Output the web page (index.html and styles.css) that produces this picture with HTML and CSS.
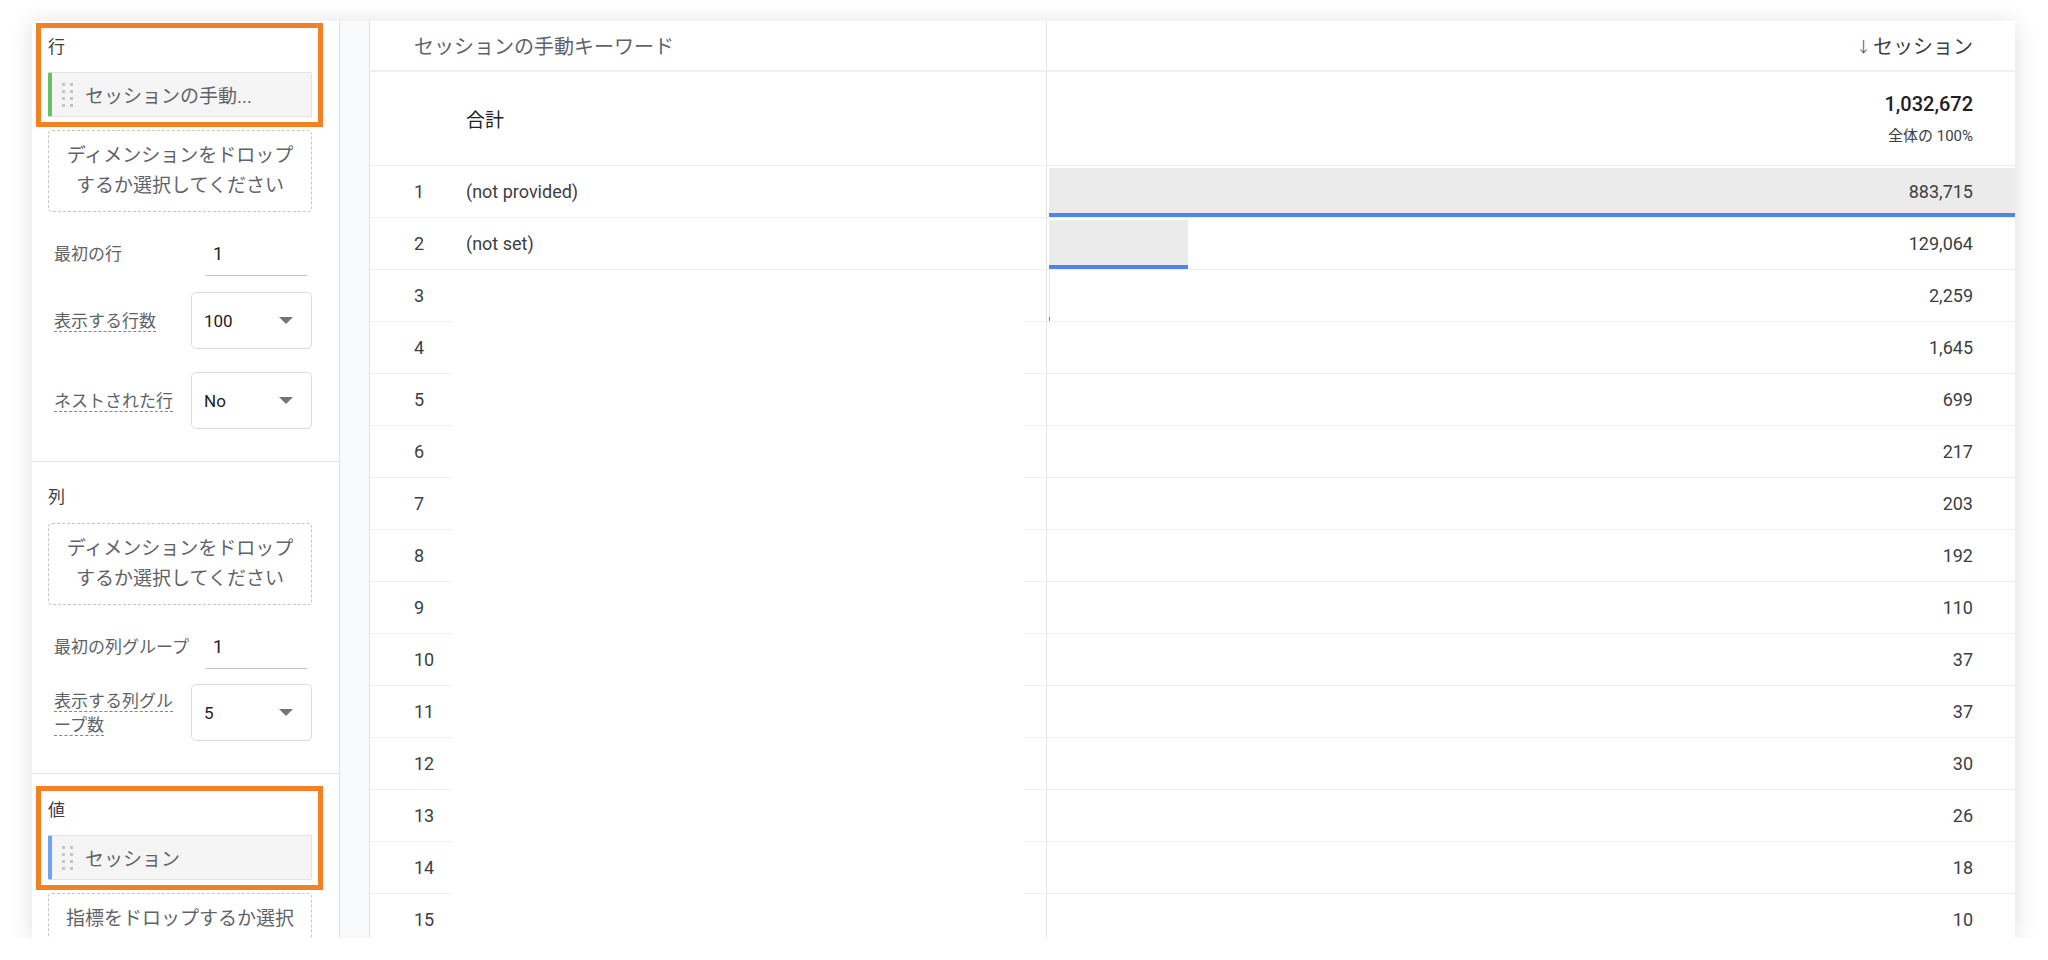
FILE: index.html
```html
<!DOCTYPE html>
<html lang="ja">
<head>
    <meta charset="UTF-8">
    <title>自由形式 - セッションの手動キーワード</title>
    <link rel="stylesheet" href="styles.css">
</head>
<body>
    <div class="card">
        <aside class="settings">
            <section class="group">
                <div class="highlight">
                    <div class="group-label">行</div>
                    <div class="chip chip-dim">
                        <svg class="handle" width="12" height="24" viewBox="0 0 12 24">
                            <rect x="0" y="0" width="3" height="3"/><rect x="8" y="0" width="3" height="3"/>
                            <rect x="0" y="7" width="3" height="3"/><rect x="8" y="7" width="3" height="3"/>
                            <rect x="0" y="14" width="3" height="3"/><rect x="8" y="14" width="3" height="3"/>
                            <rect x="0" y="21" width="3" height="3"/><rect x="8" y="21" width="3" height="3"/>
                        </svg>
                        <span>セッションの手動...</span>
                    </div>
                </div>
                <div class="dropzone">ディメンションをドロップ<br>するか選択してください</div>
                <div class="field field-input">
                    <span class="field-label">最初の行</span>
                    <div class="text-input">1</div>
                </div>
                <div class="field field-select">
                    <span class="field-label"><span class="hint">表示する行数</span></span>
                    <div class="select"><span>100</span><span class="caret"></span></div>
                </div>
                <div class="field field-select field-gap">
                    <span class="field-label"><span class="hint">ネストされた行</span></span>
                    <div class="select"><span>No</span><span class="caret"></span></div>
                </div>
            </section>

            <section class="group group-plain">
                <div class="group-label">列</div>
                <div class="dropzone dropzone-tight">ディメンションをドロップ<br>するか選択してください</div>
                <div class="field field-input">
                    <span class="field-label">最初の列グループ</span>
                    <div class="text-input">1</div>
                </div>
                <div class="field field-select field-tight">
                    <span class="field-label"><span class="hint">表示する列グループ数</span></span>
                    <div class="select"><span>5</span><span class="caret"></span></div>
                </div>
            </section>

            <section class="group group-values">
                <div class="highlight">
                    <div class="group-label">値</div>
                    <div class="chip chip-metric">
                        <svg class="handle" width="12" height="24" viewBox="0 0 12 24">
                            <rect x="0" y="0" width="3" height="3"/><rect x="8" y="0" width="3" height="3"/>
                            <rect x="0" y="7" width="3" height="3"/><rect x="8" y="7" width="3" height="3"/>
                            <rect x="0" y="14" width="3" height="3"/><rect x="8" y="14" width="3" height="3"/>
                            <rect x="0" y="21" width="3" height="3"/><rect x="8" y="21" width="3" height="3"/>
                        </svg>
                        <span>セッション</span>
                    </div>
                </div>
                <div class="dropzone dropzone-cut">指標をドロップするか選択</div>
            </section>
        </aside>

        <div class="gutter"></div>

        <div class="report">
            <div class="thead">
                <div class="cell-dim">セッションの手動キーワード</div>
                <div class="cell-metric"><span class="sort">↓</span>セッション</div>
            </div>
            <div class="total">
                <div class="cell-dim"><span class="rank"></span><span>合計</span></div>
                <div class="cell-metric">
                    <div class="total-value">1,032,672</div>
                    <div class="total-share">全体の 100%</div>
                </div>
            </div>
            <div class="tbody" id="rows">
                <!-- 3行目以降のキーワードは伏せてある -->
                <div class="mask"></div>
            </div>
        </div>
    </div>

    <script>
        const rows = [
            ['(not provided)', 883715],
            ['(not set)', 129064],
            ['', 2259],
            ['', 1645],
            ['', 699],
            ['', 217],
            ['', 203],
            ['', 192],
            ['', 110],
            ['', 37],
            ['', 37],
            ['', 30],
            ['', 26],
            ['', 18],
            ['', 10]
        ];
        const max = rows[0][1];
        const body = document.getElementById('rows');
        let html = '';
        rows.forEach((r, i) => {
            const pct = (r[1] / max * 100).toFixed(3);
            html += `
                <div class="row">
                    <div class="cell-dim"><span class="rank">${i + 1}</span><span>${r[0]}</span></div>
                    <div class="cell-metric">
                        <div class="bar" style="width: calc(${pct}% - 2px)"></div>
                        <span class="value">${r[1].toLocaleString('en-US')}</span>
                    </div>
                </div>`;
        });
        body.insertAdjacentHTML('afterbegin', html);
    </script>
</body>
</html>
```

FILE: styles.css
```css
body {
    margin: 0;
    padding: 21px 0 0 32px;
    background: #fff;
    font-family: Roboto, "Noto Sans CJK JP", sans-serif;
    color: #3c4043;
}
.card {
    display: flex;
    width: 1983px;
    height: 917px;
    overflow: hidden;
    background: #fff;
    box-shadow: 0 2px 22px rgba(0, 0, 0, 0.13);
}

/* 左の設定パネル */
.settings {
    width: 308px;
    flex: none;
    border-right: 1px solid #e3e3e3;
    box-sizing: border-box;
    overflow: hidden;
}
.group {
    padding: 2px 27px 32px 16px;
    border-bottom: 1px solid #e3e3e3;
}
.group-plain {
    padding-top: 23px;
}
.group-values {
    padding-top: 12px;
    border-bottom: none;
}
.highlight {
    margin: 0 -11px 0 -12px;
    border: 5px solid #f28123;
    padding: 7px 6px 5px 7px;
}
.group-label {
    font-size: 17px;
    line-height: 24px;
    color: #3c4043;
}
.chip {
    display: flex;
    align-items: center;
    height: 45px;
    box-sizing: border-box;
    margin-top: 13px;
    padding-left: 10px;
    background: #f5f5f5;
    border: 1px solid #e2e2e2;
    border-left: 4px solid #6abf69;
    border-radius: 2px;
    font-size: 19px;
    color: #5f6368;
}
.chip-metric {
    border-left-color: #6fa2f2;
}
.handle {
    fill: #c4c4c4;
    margin-right: 11px;
    flex: none;
}
.dropzone {
    margin-top: 3px;
    padding: 10px 0;
    border: 1px dashed #c6c6c6;
    border-radius: 4px;
    font-size: 19px;
    line-height: 30px;
    text-align: center;
    color: #5f6368;
}
.dropzone-tight {
    margin-top: 14px;
}
.dropzone-cut {
    height: 60px;
}
.field {
    display: flex;
    align-items: center;
    justify-content: space-between;
    padding-left: 6px;
    font-size: 17px;
}
.field-label {
    line-height: 24px;
    color: #5f6368;
}
.field-input {
    margin-top: 20px;
}
.field-select {
    margin-top: 16px;
}
.field-select .field-label {
    width: 128px;
}
.field-gap {
    margin-top: 23px;
}
.field-tight {
    margin-top: 15px;
}
.hint {
    border-bottom: 1px dashed #80868b;
}
.text-input {
    width: 101px;
    height: 44px;
    box-sizing: border-box;
    margin-right: 5px;
    padding-left: 7px;
    border-bottom: 1px solid #c4c4c4;
    line-height: 43px;
    font-size: 18px;
    color: #202124;
}
.select {
    display: flex;
    align-items: center;
    justify-content: space-between;
    width: 121px;
    height: 57px;
    box-sizing: border-box;
    padding: 0 18px 0 12px;
    border: 1px solid #dadce0;
    border-radius: 5px;
    font-size: 17px;
    color: #202124;
}
.caret {
    width: 0;
    height: 0;
    border-left: 7px solid transparent;
    border-right: 7px solid transparent;
    border-top: 7px solid #757575;
}

.gutter {
    width: 29px;
    flex: none;
    background: #f8f9fa;
    border-right: 1px solid #e3e3e3;
}

/* レポート表 */
.report {
    flex: 1;
    min-width: 0;
}
.thead,
.total,
.row {
    display: flex;
}
.cell-dim {
    display: flex;
    align-items: center;
    width: 677px;
    flex: none;
    padding-left: 44px;
    box-sizing: border-box;
    border-right: 1px solid #e3e3e3;
}
.cell-metric {
    position: relative;
    flex: 1;
    display: flex;
    align-items: center;
    justify-content: flex-end;
    padding-right: 42px;
}
.thead {
    height: 49px;
    border-bottom: 2px solid #efefef;
    font-size: 20px;
}
.thead .cell-dim {
    color: #5f6368;
}
.thead .cell-metric {
    color: #3c4043;
}
.sort {
    font-size: 15px;
    margin-right: 2px;
    color: #5f6368;
}
.total {
    height: 94px;
    box-sizing: border-box;
    border-bottom: 1px solid #efefef;
}
.total .cell-dim {
    font-size: 19px;
    color: #202124;
}
.total .cell-metric {
    flex-direction: column;
    align-items: flex-end;
    justify-content: center;
    padding-top: 3px;
    box-sizing: border-box;
}
.total-value {
    font-size: 20px;
    font-weight: 500;
    line-height: 24px;
    color: #202124;
}
.total-share {
    margin-top: 8px;
    font-size: 15px;
    line-height: 24px;
    color: #3c4043;
}
.rank {
    width: 52px;
    flex: none;
}
.tbody {
    position: relative;
}
.row {
    height: 52px;
    box-sizing: border-box;
    border-bottom: 1px solid #efefef;
    font-size: 18px;
}
.row .cell-dim {
    color: #3c4043;
}
.bar {
    position: absolute;
    left: 2px;
    top: 2px;
    bottom: 0;
    background: #ebebeb;
    border-bottom: 4px solid #4a86ec;
    box-sizing: border-box;
}
.value {
    position: relative;
    color: #3c4043;
}
.mask {
    position: absolute;
    top: 104px;
    left: 82px;
    width: 572px;
    bottom: 0;
    background: #fff;
}
```
